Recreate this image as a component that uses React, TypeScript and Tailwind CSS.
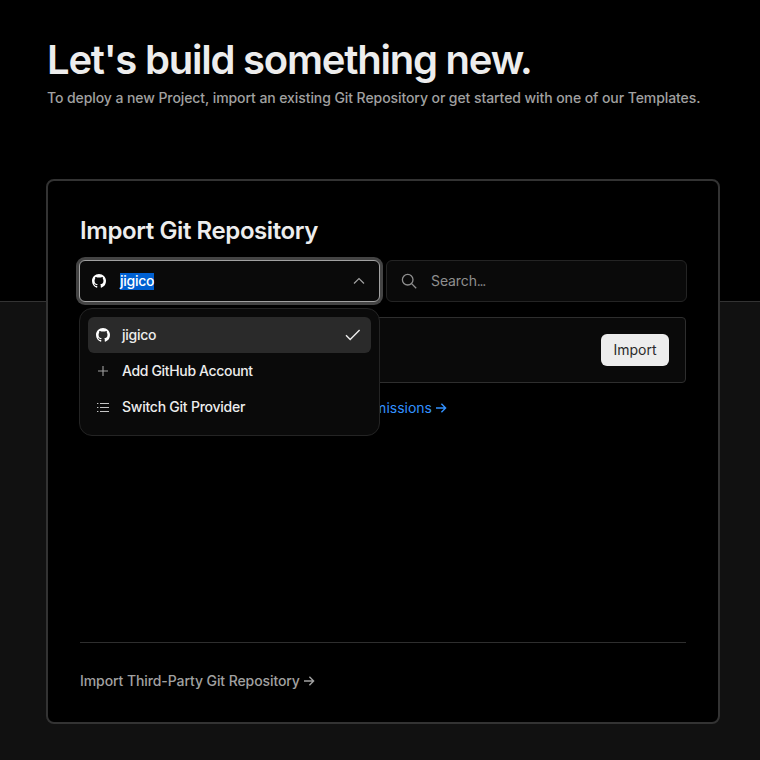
import React from "react";

function GithubMark() {
  return (
    <svg width="14" height="14" viewBox="0 0 16 16" fill="#fff" className="shrink-0">
      <path
        fillRule="evenodd"
        d="M8 0C3.58 0 0 3.58 0 8c0 3.54 2.29 6.53 5.47 7.59.4.07.55-.17.55-.38 0-.19-.01-.82-.01-1.49-2.01.37-2.53-.49-2.69-.94-.09-.23-.48-.94-.82-1.13-.28-.15-.68-.52-.01-.53.63-.01 1.08.58 1.23.82.72 1.21 1.87.87 2.33.66.07-.52.28-.87.51-1.07-1.78-.2-3.64-.89-3.64-3.95 0-.87.31-1.59.82-2.15-.08-.2-.36-1.02.08-2.12 0 0 .67-.21 2.2.82.64-.18 1.32-.27 2-.27s1.36.09 2 .27c1.53-1.04 2.2-.82 2.2-.82.44 1.1.16 1.92.08 2.12.51.56.82 1.27.82 2.15 0 3.07-1.87 3.75-3.65 3.95.29.25.54.73.54 1.48 0 1.07-.01 1.93-.01 2.2 0 .21.15.46.55.38A8.01 8.01 0 0 0 16 8c0-4.42-3.58-8-8-8z"
      />
    </svg>
  );
}

function ArrowRight() {
  return (
    <svg width="12" height="12" viewBox="0 0 12 12" fill="none" stroke="currentColor" strokeWidth="1.4" className="shrink-0">
      <path d="M1 6h9.4M6.4 1.8 10.6 6l-4.2 4.2" />
    </svg>
  );
}

function AccountMenu() {
  return (
    <div className="absolute left-[-1px] top-[61px] h-[128px] w-[301px] rounded-[13px] border border-[#242424] bg-[#0a0a0a] p-2 text-[14px] font-medium text-[#ededed]">
      <div className="flex h-9 items-center rounded-md bg-[#2a2a2a] px-2">
        <GithubMark />
        <span className="mb-px ml-3 grow tracking-[-0.25px]">jigico</span>
        <svg width="16" height="12" viewBox="0 0 16 12" fill="none" stroke="#ededed" strokeWidth="1.4" className="mr-[2px]">
          <path d="m1 6.2 4.2 4.2 9.4-9.4" />
        </svg>
      </div>
      <div className="flex h-9 items-center px-2">
        <svg width="14" height="14" viewBox="0 0 14 14" stroke="#a1a1a1" strokeWidth="1.1">
          <path d="M7 2v10M2 7h10" />
        </svg>
        <span className="mb-px ml-3 tracking-[-0.34px]">Add GitHub Account</span>
      </div>
      <div className="flex h-9 items-center px-2">
        <svg width="14" height="14" viewBox="0 0 14 14" stroke="#c4c4c4" strokeWidth="1">
          <path d="M4 3.5h9M4 7.5h9M4 11.5h9M1 3.5h1.4M1 7.5h1.4M1 11.5h1.4" />
        </svg>
        <span className="mb-px ml-3 tracking-[-0.24px]">Switch Git Provider</span>
      </div>
    </div>
  );
}

export default function App() {
  return (
    <div className="flex h-[760px] w-[760px] flex-col overflow-hidden bg-[#111] font-['Inter',sans-serif]">
      <header className="h-[302px] shrink-0 border-b border-[#333] bg-black pl-[47px] pt-9">
        <h1 className="whitespace-nowrap text-[40px] font-semibold leading-[48px] tracking-[-1.22px] text-[#ededed]">
          Let's build something new.
        </h1>
        <p className="mt-1 whitespace-nowrap text-[14px] font-[450] leading-5 tracking-[-0.08px] text-[#a1a1a1]">
          To deploy a new Project, import an existing Git Repository or get started with one of our Templates.
        </p>
      </header>

      <main className="relative ml-[46px] mr-10 -mt-[123px] flex h-[545px] shrink-0 flex-col rounded-lg border-2 border-[#333] bg-black px-8">
        <h2 className="mt-[34px] whitespace-nowrap text-[24px] font-semibold leading-8 tracking-[-0.41px] text-[#ededed]">
          Import Git Repository
        </h2>
        <div className="relative">
          <div className="-mx-px mt-[13px] flex gap-[6px] text-[14px]">
            <div className="flex h-[42px] w-[301px] items-center rounded-md border border-[#a1a1a1] bg-[#0a0a0a] pl-3 pr-[14px] text-[#ededed] ring-[3px] ring-[#444]">
              <GithubMark />
              <span className="ml-[14px] bg-[#0060d1] pb-[2px] font-[450] leading-[15px] tracking-[-0.25px] text-white">jigico</span>
              <svg width="12" height="8" viewBox="0 0 12 8" fill="none" stroke="#a1a1a1" strokeWidth="1.2" className="ml-auto">
                <path d="m1 6.5 5-5 5 5" />
              </svg>
            </div>
            <div className="flex h-[42px] w-[301px] items-center rounded-md border border-[#242424] bg-[#0a0a0a] pl-[14px] text-[#8f8f8f]">
              <svg width="16" height="16" viewBox="0 0 16 16" fill="none" stroke="#8f8f8f" strokeWidth="1.3">
                <circle cx="6.7" cy="6.7" r="5.3" />
                <path d="m10.6 10.6 4.6 4.6" />
              </svg>
              <span className="mb-px ml-[14px] leading-5 tracking-[-0.1px]">
                Search<span className="tracking-[-1.3px]">...</span>
              </span>
            </div>
          </div>
          <div className="mt-[15px] flex h-[66px] items-center justify-end rounded-[4px] border border-[#2e2e2e] bg-[#0a0a0a] pr-4">
            <button className="h-8 w-[68px] rounded-md bg-[#ededed] pb-0.5 text-[14px] text-[#2a2a2a]">Import</button>
          </div>
          <a className="mt-[15px] flex h-5 w-[367px] items-center justify-end gap-[3px] whitespace-nowrap text-[14px] text-[#3291ff]">
            <span className="mb-px">Permissions</span> <ArrowRight />
          </a>
          <AccountMenu />
        </div>
        <footer className="mb-[31px] mt-auto border-t border-[#2e2e2e] pt-7 text-[14px] font-[450] leading-5 text-[#a1a1a1]">
          <a className="flex items-center gap-[3px] whitespace-nowrap tracking-[-0.09px]">
            Import Third-Party Git Repository <ArrowRight />
          </a>
        </footer>
      </main>
    </div>
  );
}
